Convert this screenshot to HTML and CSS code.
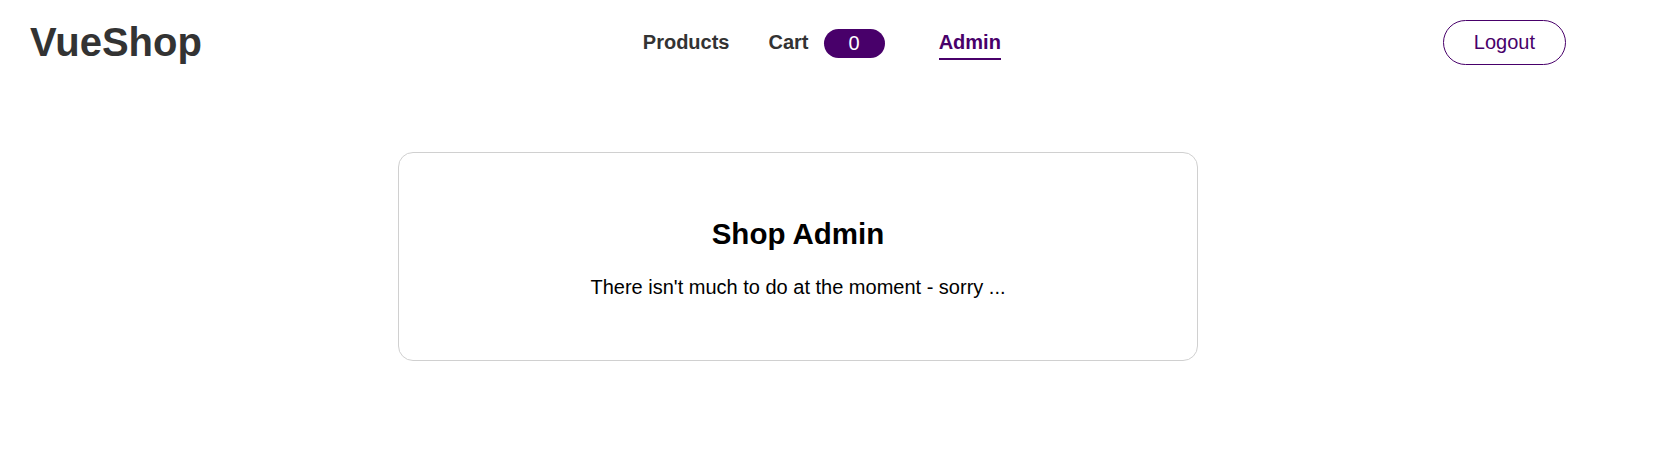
FILE: index.html
```html
<!DOCTYPE html>
<html lang="en">
<head>
<meta charset="utf-8">
<title>VueShop</title>
<link rel="stylesheet" href="styles.css">
</head>
<body>
<div class="page">
  <header class="header">
    <div class="logo">VueShop</div>
    <nav class="nav">
      <a class="nav-link" href="#">Products</a>
      <a class="nav-link cart-link" href="#">Cart <span class="badge">0</span></a>
      <a class="nav-link active" href="#">Admin</a>
    </nav>
    <button class="logout">Logout</button>
  </header>
  <main class="main">
    <section class="card">
      <h2 class="card-title">Shop Admin</h2>
      <p class="card-text">There isn't much to do at the moment - sorry ...</p>
    </section>
  </main>
</div>
</body>
</html>
```

FILE: styles.css
```css
* { box-sizing: border-box; }

body {
  margin: 0;
  background: #fff;
  font-family: "Liberation Sans", Arial, sans-serif;
  color: #000;
}

.page {
  width: 1536px;
  margin-left: 30px;
}

.header {
  display: flex;
  justify-content: space-between;
  align-items: center;
  padding-top: 19px;
}

.logo {
  font-size: 40px;
  font-weight: bold;
  color: #333;
  line-height: 46px;
}

.nav {
  display: flex;
  align-items: center;
  gap: 39px;
  margin-left: -1px;
}

.nav-link {
  display: flex;
  align-items: center;
  font-size: 20px;
  font-weight: bold;
  color: #333;
  text-decoration: none;
  line-height: 23px;
  padding: 4px 0 4px;
  border-bottom: 2px solid transparent;
  border-top: 2px solid transparent;
}

.cart-link {
  gap: 15px;
  margin-right: 15px;
}

.badge {
  display: inline-block;
  background: #48006a;
  color: #fff;
  font-weight: normal;
  font-size: 20px;
  line-height: 23px;
  padding: 3px 25px 3px;
  border-radius: 15px;
  margin-top: 2px;
}

.nav-link.active {
  color: #48006a;
  border-bottom-color: #48006a;
}

.logout {
  font-family: "Liberation Sans", Arial, sans-serif;
  font-size: 20px;
  line-height: 23px;
  color: #48006a;
  background: #fff;
  border: 1px solid #48006a;
  border-radius: 23px;
  padding: 10px 30px;
  cursor: pointer;
}

.main {
  display: flex;
  justify-content: center;
  padding-top: 87px;
}

.card {
  width: 800px;
  border: 1px solid #d0d0d0;
  border-radius: 15px;
  padding: 64px 32px 61px;
  text-align: center;
}

.card-title {
  margin: 0 0 25px;
  font-size: 29.5px;
  font-weight: bold;
  color: #000;
}

.card-text {
  margin: 0;
  font-size: 20px;
  color: #000;
}
```
